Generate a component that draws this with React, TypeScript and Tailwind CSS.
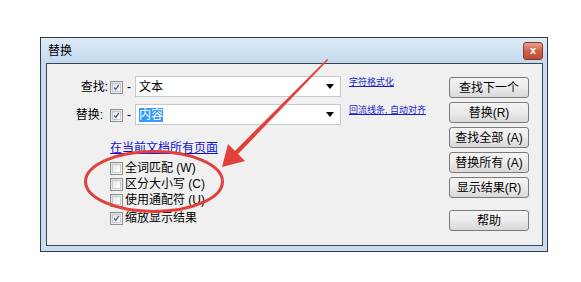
import React from "react"

function Check({ checked }: { checked?: boolean }) {
  return (
    <span className="inline-flex h-[13px] w-[13px] shrink-0 items-center justify-center border border-[#8e8f8f] bg-gradient-to-br from-[#dcdcdc] to-[#fbfbfb]">
      <span className="flex h-[9px] w-[9px] items-center justify-center border border-[#c8c8c8] bg-gradient-to-br from-[#e4e4e4] to-[#ffffff]">
        {checked && (
          <svg width="9" height="9" viewBox="0 0 9 9">
            <path d="M1.5 4.5 L3.6 7 L7.6 1.2" fill="none" stroke="#4a5f8a" strokeWidth="1.6" />
          </svg>
        )}
      </span>
    </span>
  )
}

function Combo({ children }: { children: React.ReactNode }) {
  return (
    <div className="flex h-[21px] w-[206px] items-center border border-[#c5c9d0] bg-white pl-[3px]">
      <div className="flex-1 text-[12px] leading-[14px] text-black">{children}</div>
      <svg width="8" height="5" viewBox="0 0 8 5" className="mr-[6px]">
        <path d="M0 0 H8 L4 5 Z" fill="#000" />
      </svg>
    </div>
  )
}

function Btn({ children, className = "" }: { children: React.ReactNode; className?: string }) {
  return (
    <button className={"flex h-[21px] w-[80px] items-center justify-center rounded-[3px] border border-[#7a7a7a] bg-gradient-to-b from-[#f4f4f4] via-[#ebebeb] to-[#d8d8d8] text-[12px] leading-[14px] text-black " + className}>
      {children}
    </button>
  )
}

export default function App() {
  const options = [
    { label: "全词匹配 (W)", on: false },
    { label: "区分大小写 (C)", on: false },
    { label: "使用通配符 (U)", on: false },
  ]
  return (
    <div
      className="relative h-[282px] w-[581px] overflow-hidden bg-white pl-[40px] pt-[37px]"
      style={{ fontFamily: '"Liberation Sans","Noto Sans CJK SC",sans-serif' }}
    >
      <div className="flex h-[215px] w-[508px] flex-col border border-[#2f3b48] bg-[#c9ddf1]">
        {/* title bar */}
        <div className="flex h-[25px] items-center justify-between bg-gradient-to-b from-[#dfebf8] to-[#c3d9f0] pl-[7px] pr-[4px]">
          <span className="text-[12px] leading-[14px] text-black">替换</span>
          <div className="flex h-[18px] w-[20px] items-center justify-center rounded-[3px] border border-[#7d3a2c] bg-gradient-to-b from-[#e9a18c] via-[#d1614a] to-[#bf4a32] text-[11px] font-bold leading-none text-white">
            x
          </div>
        </div>
        {/* panel */}
        <div className="ml-[5px] mr-[4px] flex h-[183px] border border-[#3c4450] bg-[#f0f0f0]">
          <div className="flex flex-1 flex-col pt-[12px]">
            <div className="flex h-[21px] items-center">
              <span className="w-[61px] text-right text-[12px] leading-[14px] text-black">查找:</span>
              <span className="ml-[2px]"><Check checked /></span>
              <span className="mx-[4px] text-[12px] text-black">-</span>
              <Combo>文本</Combo>
              <a className="ml-[8px] -mt-[8px] text-[9px] leading-[11px] text-[#1d1dc8] underline">字符格式化</a>
            </div>
            <div className="mt-[7px] flex h-[21px] items-center">
              <span className="w-[61px] pr-[5px] text-right text-[12px] leading-[14px] text-black">替换:</span>
              <span className="ml-[2px]"><Check checked /></span>
              <span className="mx-[4px] text-[12px] text-black">-</span>
              <Combo>
                <span className="bg-[#3399ff] text-white">内容</span>
              </Combo>
              <a className="ml-[8px] -mt-[8px] text-[9px] leading-[11px] text-[#1d1dc8] underline">回流线条, 自动对齐</a>
            </div>
            <a className="ml-[63px] mt-[15px] text-[12px] leading-[16px] text-[#1212d0] underline">在当前文档所有页面</a>
            <div className="ml-[63px] mt-[4px] flex flex-col">
              {options.map((o) => (
                <div key={o.label} className="flex h-[16px] items-center gap-[2px]">
                  <Check checked={o.on} />
                  <span className="text-[12px] leading-[14px] text-black">{o.label}</span>
                </div>
              ))}
              <div className="mt-[2px] flex h-[16px] items-center gap-[2px]">
                <Check checked />
                <span className="text-[12px] leading-[14px] text-black">缩放显示结果</span>
              </div>
            </div>
          </div>
          <div className="flex flex-col gap-[4px] pr-[13px] pt-[13px]">
            <Btn>查找下一个</Btn>
            <Btn>替换(R)</Btn>
            <Btn>查找全部 (A)</Btn>
            <Btn>替换所有 (A)</Btn>
            <Btn>显示结果(R)</Btn>
            <Btn className="mt-[8px]">帮助</Btn>
          </div>
        </div>
      </div>

      {/* red annotation */}
      <svg className="pointer-events-none absolute left-0 top-0" width="581" height="282" viewBox="0 0 581 282">
        <ellipse cx="154" cy="181.5" rx="68.5" ry="30" fill="none" stroke="#e2403a" strokeWidth="3" />
        <polygon points="327,59 328.2,60 237.6,154.6 234.4,151.4" fill="#e2403a" />
        <polygon points="222,167 228,144 245,161" fill="#e2403a" />
      </svg>
    </div>
  )
}
